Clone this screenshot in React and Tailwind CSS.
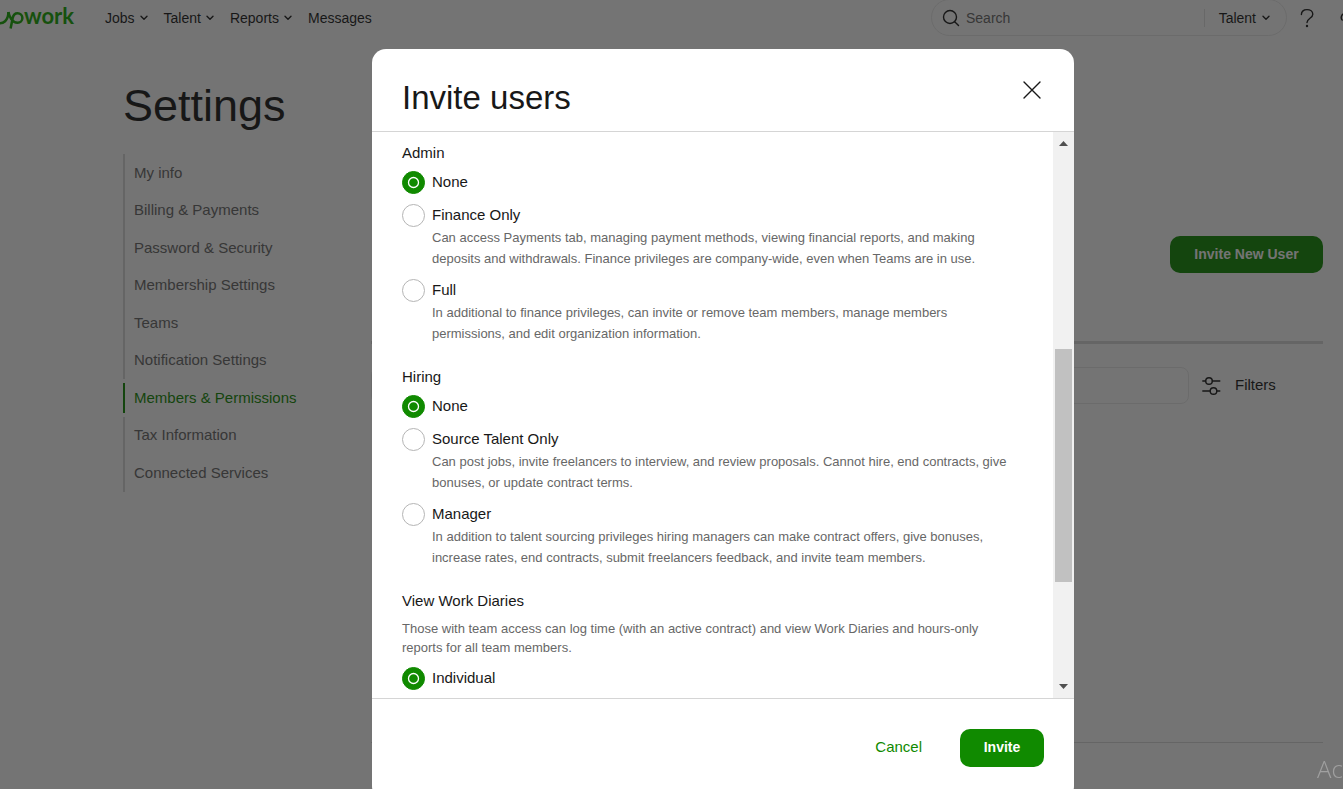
const navLinks = [
  { label: 'Jobs', menu: true },
  { label: 'Talent', menu: true },
  { label: 'Reports', menu: true },
  { label: 'Messages', menu: false },
]

const settingsLinks = [
  'My info',
  'Billing & Payments',
  'Password & Security',
  'Membership Settings',
  'Teams',
  'Notification Settings',
  'Members & Permissions',
  'Tax Information',
  'Connected Services',
]

const groups = [
  {
    name: 'admin',
    title: 'Admin',
    options: [
      { label: 'None' },
      {
        label: 'Finance Only',
        text: 'Can access Payments tab, managing payment methods, viewing financial reports, and making deposits and withdrawals. Finance privileges are company-wide, even when Teams are in use.',
      },
      {
        label: 'Full',
        text: 'In additional to finance privileges, can invite or remove team members, manage members permissions, and edit organization information.',
      },
    ],
  },
  {
    name: 'hiring',
    title: 'Hiring',
    options: [
      { label: 'None' },
      {
        label: 'Source Talent Only',
        text: 'Can post jobs, invite freelancers to interview, and review proposals. Cannot hire, end contracts, give bonuses, or update contract terms.',
      },
      {
        label: 'Manager',
        text: 'In addition to talent sourcing privileges hiring managers can make contract offers, give bonuses, increase rates, end contracts, submit freelancers feedback, and invite team members.',
      },
    ],
  },
  {
    name: 'diaries',
    title: 'View Work Diaries',
    intro:
      'Those with team access can log time (with an active contract) and view Work Diaries and hours-only reports for all team members.',
    options: [{ label: 'Individual' }],
  },
]

function Chevron() {
  return (
    <svg width="8" height="6" viewBox="0 0 8 6" fill="none" stroke="currentColor" strokeWidth="1.4" strokeLinecap="round" strokeLinejoin="round" aria-hidden="true">
      <path d="M1 1.3 4 4.3 7 1.3" />
    </svg>
  )
}

function Logo() {
  return (
    <a href="#" aria-label="upwork" className="flex h-9 w-[73px] shrink-0 items-start text-[#14a800]">
      <svg width="24" height="36" viewBox="0 0 24 36" fill="none" stroke="currentColor" strokeWidth="2.5" className="shrink-0" aria-hidden="true">
        <path d="M-3 23C3.6 24.4 8.2 20.5 8.4 12" />
        <path d="M8.4 12C9.2 16.5 12 22.8 17.6 22.8A4.8 4.8 0 0 0 17.6 13.2C14.4 13.2 13.2 15.4 12.7 18L10.6 28.6" />
      </svg>
      <span className="font-['Lato',sans-serif] text-[22px] leading-8 font-bold">work</span>
    </a>
  )
}

function Header() {
  return (
    <header className="-mt-px flex h-[37px] items-center overflow-hidden text-sm">
      <Logo />
      <nav aria-label="Main" className="ml-8 flex items-center gap-4">
        {navLinks.map((l) => (
          <a key={l.label} href="#" className="flex items-center gap-[5px]">
            {l.label}
            {l.menu && <Chevron />}
          </a>
        ))}
      </nav>
      <div className="-mr-5 ml-auto flex shrink-0 items-center">
        <form className="flex h-[37px] w-[356px] items-center rounded-full border border-[#e9e9e9] pl-2.5">
          <svg width="18" height="18" viewBox="0 0 18 18" fill="none" stroke="currentColor" strokeWidth="1.4" strokeLinecap="round" aria-hidden="true">
            <circle cx="8" cy="8" r="6.5" />
            <path d="M12.7 12.7 16.5 16.5" />
          </svg>
          <input type="text" aria-label="Search" placeholder="Search" className="ml-1.5 min-w-0 flex-1 bg-transparent placeholder:text-[#676767]" />
          <button type="button" className="flex h-[18px] items-center gap-1.5 border-l border-[#e0e0e0] pr-4 pl-3.5">
            Talent
            <Chevron />
          </button>
        </form>
        <button type="button" aria-label="Help" className="ml-2 grid size-6 place-items-center">
          <svg width="14" height="20" viewBox="0 0 14 20" fill="none" stroke="currentColor" strokeWidth="1.4" strokeLinecap="round" aria-hidden="true">
            <path d="M1.4 6.5C1.4 3.3 3.8 1.6 7 1.6s5.8 1.8 5.8 4.6c0 4.1-5.8 4.1-5.8 8.4" />
            <circle cx="7" cy="18" r=".5" fill="currentColor" />
          </svg>
        </button>
        <button type="button" aria-label="Notifications" className="ml-5 size-6">
          <svg width="24" height="24" viewBox="0 0 24 24" fill="none" stroke="currentColor" strokeWidth="1.4" aria-hidden="true">
            <path d="M6 7.5A4 4 0 0 0 3.6 14.5M6 7.5A8 8 0 0 1 18 7.5M9 18a3 3 0 0 0 6 0" />
          </svg>
        </button>
      </div>
    </header>
  )
}

function Sidebar() {
  return (
    <aside className="w-56 shrink-0 pt-[42px]">
      <h1 className="text-[45px] leading-[56px] font-normal">Settings</h1>
      <ul className="mt-5 grid h-[338px] auto-rows-fr text-[15px] text-[#676767]">
        {settingsLinks.map((label) =>
          label === 'Members & Permissions' ? (
            <li key={label} className="flex items-center">
              <a href="#" aria-current="page" className="flex h-[30px] items-center border-l-2 border-[#108a00] pl-[9px] text-[#108a00]">
                {label}
              </a>
            </li>
          ) : (
            <li key={label} className="flex items-center border-l-2 border-[#d9d9d9] pl-[9px]">
              <a href="#">{label}</a>
            </li>
          ),
        )}
      </ul>
    </aside>
  )
}

function Members() {
  return (
    <main className="flex min-w-0 flex-1 flex-col pt-[200px]">
      <button type="button" className="h-[37px] w-[153px] self-end rounded-[10px] bg-[#108a00] pb-0.5 text-sm font-bold text-white">
        Invite New User
      </button>
      <div className="mt-[68px] border-t-[3px] border-[#d9d9d9]" />
      <div className="mt-[23px] flex items-center">
        <input type="text" aria-label="Search members" className="h-[37px] min-w-0 flex-1 rounded-lg border border-[#e9e9e9]" />
        <button type="button" className="ml-3 flex w-[122px] items-center gap-3.5 text-[15px]">
          <svg width="20" height="20" viewBox="0 0 20 20" fill="none" stroke="currentColor" strokeWidth="1.4" strokeLinecap="round" aria-hidden="true">
            <path d="M1.8 5H4.7M11.3 5H18.8M1.8 15H9.2M15.8 15H18.8" />
            <circle cx="8" cy="5" r="3.3" />
            <circle cx="12.5" cy="15" r="3.3" />
          </svg>
          Filters
        </button>
      </div>
      <div className="mt-[338px] border-t border-[#d9d9d9]" />
    </main>
  )
}

function Option({ group, option, checked }) {
  const id = group + '-' + option.label.toLowerCase().replaceAll(' ', '-')
  return (
    <div>
      <div className="flex h-[23px] items-start gap-[7px]">
        <span className="relative grid size-[23px] shrink-0">
          <input type="radio" id={id} name={group} defaultChecked={checked} className="peer size-[23px] appearance-none rounded-full border border-[#b5b5b5] bg-white checked:border-[#108a00] checked:bg-[#108a00]" />
          <svg width="23" height="23" viewBox="0 0 23 23" fill="none" stroke="#fff" strokeWidth="1.3" className="pointer-events-none absolute inset-0 opacity-0 peer-checked:opacity-100" aria-hidden="true">
            <circle cx="11.5" cy="11.5" r="5" />
          </svg>
        </span>
        <label htmlFor={id} className="text-[15px] leading-[21px]">
          {option.label}
        </label>
      </div>
      {option.text && <p className="max-w-[610px] pl-[30px] text-[13px] leading-[21px] text-[#676767]">{option.text}</p>}
    </div>
  )
}

function Scrollbar() {
  return (
    <div className="flex w-[21px] shrink-0 flex-col items-center bg-[#f1f1f1] text-[#505050]" aria-hidden="true">
      <svg width="9" height="5" viewBox="0 0 9 5" fill="currentColor" className="mt-[9px]">
        <path d="M0 5 4.5 0 9 5Z" />
      </svg>
      <div className="mt-[203px] h-[233px] w-[17px] bg-[#c1c1c1]" />
      <svg width="9" height="5" viewBox="0 0 9 5" fill="currentColor" className="mt-auto mb-[9px]">
        <path d="M0 0 4.5 5 9 0Z" />
      </svg>
    </div>
  )
}

function InviteDialog() {
  return (
    <div role="dialog" aria-modal="true" aria-labelledby="invite-title" className="w-[702px] max-w-full rounded-[14px] bg-white">
      <div className="flex items-start justify-between border-b border-[#d5d5d5] px-[30px] pt-[29px] pb-[13px]">
        <h2 id="invite-title" className="text-[33px] leading-10 font-normal">
          Invite users
        </h2>
        <button type="button" aria-label="Close" className="grid size-6 place-items-center">
          <svg width="18" height="18" viewBox="0 0 18 18" fill="none" stroke="currentColor" strokeWidth="1.4" strokeLinecap="round" aria-hidden="true">
            <path d="M1 1 17 17M17 1 1 17" />
          </svg>
        </button>
      </div>
      <div className="flex h-[566px]">
        <div className="flex min-w-0 flex-1 flex-col gap-[23px] overflow-hidden px-[30px] pt-[11px]">
          {groups.map((g) => (
            <fieldset key={g.name}>
              <legend className="text-[15px] leading-5">{g.title}</legend>
              {g.intro && <p className="mt-2 max-w-[610px] text-[13px] leading-[19px] text-[#676767]">{g.intro}</p>}
              <div className={g.intro ? 'mt-2.5 flex flex-col gap-2.5' : 'mt-2 flex flex-col gap-2.5'}>
                {g.options.map((o, i) => (
                  <Option key={o.label} group={g.name} option={o} checked={i === 0} />
                ))}
              </div>
            </fieldset>
          ))}
        </div>
        <Scrollbar />
      </div>
      <div className="flex items-center justify-end border-t border-[#d5d5d5] px-[30px] pt-[30px] pb-[33px]">
        <button type="button" className="h-[38px] px-[38px] pb-0.5 text-[15px] text-[#108a00]">
          Cancel
        </button>
        <button type="button" className="h-[38px] w-[84px] rounded-[10px] bg-[#108a00] pb-0.5 text-sm font-bold text-white">
          Invite
        </button>
      </div>
    </div>
  )
}

export default function App() {
  return (
    <div className="flow-root h-screen overflow-hidden bg-white font-['Liberation_Sans',Arial,sans-serif] text-[#181818]">
      <Header />
      <div className="flex gap-6 pr-5 pl-[123px]">
        <Sidebar />
        <Members />
      </div>
      <div className="fixed inset-0 flex items-start justify-center overflow-hidden bg-[#181818]/60 pt-[49px] pl-[103px]">
        <InviteDialog />
      </div>
      <p className="pointer-events-none fixed right-0 bottom-1 w-[26px] overflow-hidden font-['Open_Sans',sans-serif] text-2xl font-light whitespace-nowrap text-[#a0a0a0]">
        Ac
      </p>
    </div>
  )
}
